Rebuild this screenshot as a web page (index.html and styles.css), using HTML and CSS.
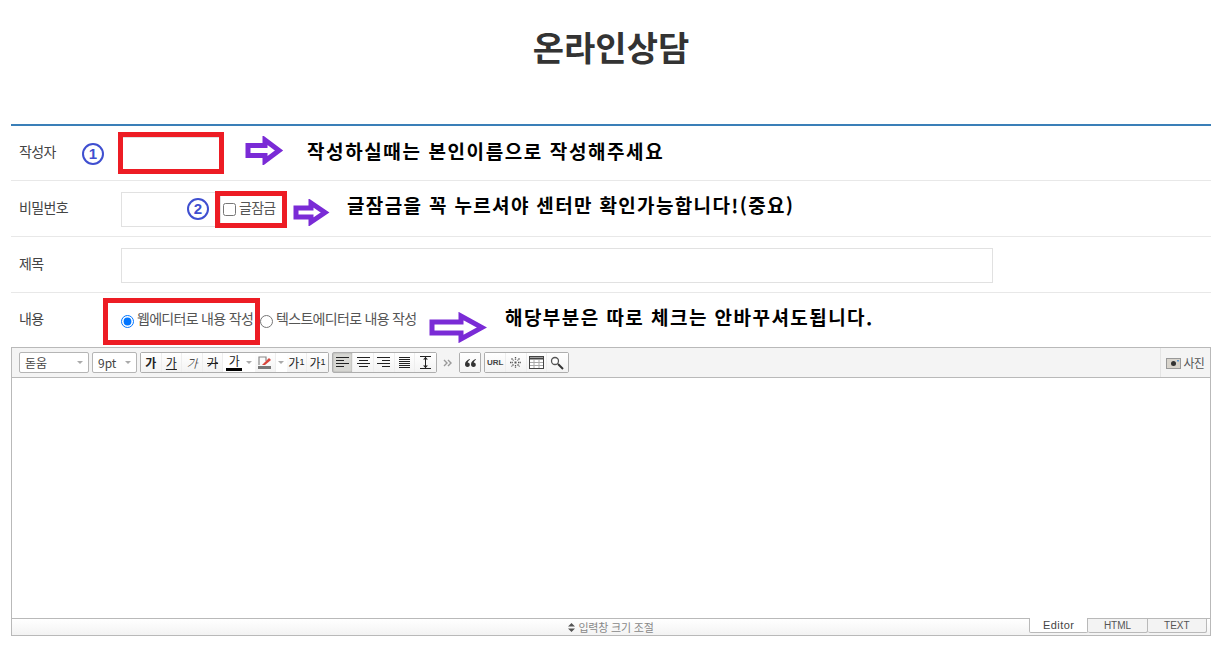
FILE: index.html
```html
<!DOCTYPE html>
<html lang="ko">
<head>
<meta charset="utf-8">
<title>온라인상담</title>
<link rel="stylesheet" href="styles.css">
</head>
<body>
<div class="page">
  <h1 class="title">온라인상담</h1>
  <form class="form">
    <div class="row"><label class="label">작성자</label><input class="input short" type="text"></div>
    <div class="row"><label class="label">비밀번호</label><input class="input short" type="password"><label class="check"><input type="checkbox" class="box">글잠금</label></div>
    <div class="row"><label class="label">제목</label><input class="input wide" type="text"></div>
    <div class="row"><label class="label">내용</label>
      <label class="check first"><input type="radio" name="ed" class="box" checked>웹에디터로 내용 작성</label>
      <label class="check second"><input type="radio" name="ed" class="box">텍스트에디터로 내용 작성</label>
    </div>
  </form>
  <div class="editor">
    <div class="toolbar">
      <div class="select font"><span>돋움</span><i class="caret"></i></div>
      <div class="select size"><span>9pt</span><i class="caret"></i></div>
      <div class="group">
        <button type="button" class="btn g b">가</button>
        <button type="button" class="btn g u">가</button>
        <button type="button" class="btn g it">가</button>
        <button type="button" class="btn g st">가</button>
        <button type="button" class="btn g col">가</button>
        <span class="drop"><i class="caret"></i></span>
        <button type="button" class="btn">
          <svg width="15" height="15" viewBox="0 0 15 15"><rect x="1" y="11" width="13" height="3" fill="#777"/><path d="M2 10V2h7v4" fill="none" stroke="#888" stroke-width="1.2"/><path d="M5 10l7-7 2 2-6 5z" fill="#d8453c"/></svg>
        </button>
        <span class="drop"><i class="caret"></i></span>
        <button type="button" class="btn g">가<sup class="mini">1</sup></button>
        <button type="button" class="btn g">가<sub class="mini">1</sub></button>
      </div>
      <div class="group">
        <button type="button" class="btn on"><svg width="15" height="13" viewBox="0 0 15 13"><path d="M1 1.5h13M1 4.500h8M1 7.500h13M1 10.500h8" stroke="#222"/></svg></button>
        <button type="button" class="btn"><svg width="15" height="13" viewBox="0 0 15 13"><path d="M1 1.500h13M3 4.500h9M1 7.500h13M3 10.500h9" stroke="#222"/></svg></button>
        <button type="button" class="btn"><svg width="15" height="13" viewBox="0 0 15 13"><path d="M1 1.500h13M6 4.500h8M1 7.500h13M6 10.500h8" stroke="#222"/></svg></button>
        <button type="button" class="btn"><svg width="15" height="13" viewBox="0 0 15 13"><path d="M2 1.500h11M2 3.500h11M2 5.500h11M2 7.500h11M2 9.500h11M2 11.500h11" stroke="#222"/></svg></button>
        <button type="button" class="btn"><svg width="15" height="15" viewBox="0 0 15 15"><path d="M2 1.500h11M2 13.500h11M7.500 2v11" stroke="#222"/><path d="M5 4.500l2.500-2.500 2.500 2.500zM5 10.500l2.500 2.500 2.500-2.500z" fill="#222"/></svg></button>
      </div>
      <span class="more">
        <svg width="10" height="8" viewBox="0 0 10 8"><path d="M1 1l3 3-3 3M5 1l3 3-3 3" fill="none" stroke="#999" stroke-width="1.400"/></svg>
      </span>
      <div class="group">
        <button type="button" class="btn"><svg width="11" height="8" viewBox="0 0 11 8"><path d="M4.500 0C2 1 0 3 0 5.200 0 7 1 8 2.400 8S4.800 7 4.800 5.700 3.800 3.600 2.700 3.600C3 2.500 3.800 1.500 5 .8zM10.500 0C8 1 6 3 6 5.200 6 7 7 8 8.400 8s2.400-1 2.400-2.300-1-2.100-2.100-2.100C9 2.500 9.800 1.500 11 .8z" fill="#333"/></svg></button>
      </div>
      <div class="group">
        <button type="button" class="btn url">URL</button>
        <button type="button" class="btn"><svg width="13" height="13" viewBox="0 0 13 13"><path d="M6.500 1v3M6.500 9v3M1 6.500h3M9 6.500h3M2.500 2.500l2 2M8.500 8.500l2 2M10.500 2.500l-2 2M4.500 8.500l-2 2" stroke="#555" stroke-width="1.300" stroke-dasharray="1.500 .7"/><rect x="5.500" y="5.500" width="2" height="2" fill="#555"/></svg></button>
        <button type="button" class="btn"><svg width="15" height="13" viewBox="0 0 15 13"><rect x=".5" y=".5" width="14" height="12" fill="#fff" stroke="#444"/><path d="M1 2.500h13" stroke="#444" stroke-width="2"/><path d="M1 6.500h13M1 9.500h13M5 4v8M10 4v8" stroke="#aaa"/></svg></button>
        <button type="button" class="btn"><svg width="14" height="14" viewBox="0 0 14 14"><circle cx="5" cy="5" r="3.500" fill="#fff" stroke="#555" stroke-width="1.300"/><path d="M8 8l5 5" stroke="#333" stroke-width="2"/></svg></button>
      </div>
      <div class="photo">
        <svg width="15" height="12" viewBox="0 0 15 12"><rect x=".5" y="1.500" width="14" height="10" fill="#d8d4cc" stroke="#999"/><circle cx="7.500" cy="6.500" r="2.500" fill="#333"/><rect x="11" y="3" width="2" height="1.500" fill="#5a9ad8"/></svg>
        <span>사진</span>
      </div>
    </div>
    <div class="canvas"></div>
    <div class="resize">
      <div class="grip"><svg width="7" height="9" viewBox="0 0 7 9"><path d="M3.500 0L7 3.500H0zM3.500 9L0 5.500h7z" fill="#555"/></svg><span>입력창 크기 조절</span></div>
      <div class="tabs">
        <span class="tab active">Editor</span><span class="tab">HTML</span><span class="tab">TEXT</span>
      </div>
    </div>
  </div>

  <div class="mark red-a"></div>
  <div class="mark red-b"></div>
  <div class="mark red-c"></div>
  <span class="num num-a">1</span>
  <span class="num num-b">2</span>
  <svg class="arrow arrow-a" width="39" height="29" viewBox="0 0 39 29"><path d="M3 9.500h17V4L34 14.500 20 25v-5.500H3z" fill="#fff" stroke="#7a2bd6" stroke-width="5"/></svg>
  <svg class="arrow arrow-b" width="37" height="27" viewBox="0 0 37 27"><path d="M3 9h15V4L32 13.500 18 23v-5H3z" fill="#fff" stroke="#7a2bd6" stroke-width="5"/></svg>
  <svg class="arrow arrow-c" width="58" height="31" viewBox="0 0 58 31"><path d="M3 10h29V4L53 15.500 32 27v-6H3z" fill="#fff" stroke="#7a2bd6" stroke-width="5"/></svg>
  <p class="note note-a">작성하실때는 본인이름으로 작성해주세요</p>
  <p class="note note-b">글잠금을 꼭 누르셔야 센터만 확인가능합니다!(중요)</p>
  <p class="note note-c">해당부분은 따로 체크는 안바꾸셔도됩니다.</p>
</div>
</body>
</html>
```
FILE: styles.css
```css
* { box-sizing: border-box; }
html, body { margin: 0; padding: 0; background: #fff; }
body { font-family: "Noto Sans CJK KR", "Noto Sans", sans-serif; color: #444; overflow: hidden; }
.page { position: relative; width: 1217px; height: 652px; padding: 0 6px 0 11px; }
.title { margin: 0; height: 124px; padding-top: 23px; text-align: center; font-size: 34px; line-height: 48px; font-weight: 700; color: #333; }
.form { border-top: 2px solid #3a7fb8; }
.row { display: flex; align-items: center; height: 56px; border-bottom: 1px solid #e8e8e8; }
.row:first-child { height: 55px; }
.row:last-child { border-bottom: 0; height: 54px; }
.label { width: 110px; padding-left: 8px; margin-top: -4px; font-size: 14px; letter-spacing: -.6px; color: #444; }
.input { height: 35px; margin-top: 2px; border: 1px solid #e1e1e1; background: #fff; padding: 0 6px; }
.short { width: 100px; }
.wide { width: 872px; }
.check { display: inline-flex; align-items: center; margin-top: -4px; font-size: 14px; letter-spacing: -.7px; color: #555; }
.row .check { margin-left: 2px; }
.row .first { margin-left: 0; }
.row .second { margin-left: 7px; }
.box { width: 13px; height: 13px; margin: 6px 3px 0 0; }
.editor { border: 1px solid #b9b9b9; height: 289px; display: flex; flex-direction: column; }
.toolbar { display: flex; align-items: center; height: 30px; padding-left: 7px; padding-right: 0; background: #f4f4f4; border-bottom: 1px solid #b9b9b9; gap: 3px; }
.select { display: flex; align-items: center; justify-content: space-between; height: 21px; background: #fff; border: 1px solid #b5b5b5; border-radius: 2px; padding: 0 5px; font-size: 12px; color: #444; }
.font { width: 70px; }
.size { width: 45px; }
.caret { display: block; width: 0; height: 0; border: 3px solid transparent; border-top: 3px solid #aaa; border-bottom: 0; }
.group { display: flex; align-items: stretch; height: 21px; background: #fff; border: 1px solid #aeaeae; border-radius: 2px; }
.btn { display: flex; align-items: center; justify-content: center; width: 20.6px; height: 19px; padding: 0; border: 0; border-right: 1px solid #eee; background: linear-gradient(#fff, #f3f3f3); font-family: inherit; font-size: 12px; color: #222; line-height: 1; }
.btn:last-child { border-right: 0; }
.on { background: #d8d8d4; box-shadow: inset 0 0 2px #999; }
.drop { display: flex; align-items: center; justify-content: center; width: 11px; }
.b { font-weight: 700; }
.u { text-decoration: underline; }
.it { font-style: italic; font-weight: 300; }
.st { text-decoration: line-through; }
.col { border-bottom: 3px solid #000; height: 17px; margin-top: 1px; width: 15.600px; margin-left: 3px; margin-right: 2px; border-right: 0; background: none; }
.mini { font: 400 9px/1 "Liberation Sans", sans-serif; }
.more { display: flex; width: 16px; justify-content: center; }
.url { font-size: 8px; font-weight: 700; font-family: "Liberation Sans", sans-serif; color: #444; }
.photo { margin-left: auto; display: flex; align-items: center; gap: 3px; height: 29px; padding: 0 6px 0 5px; border-left: 1px solid #e4e4e4; font-size: 12px; letter-spacing: -.8px; color: #555; }
.canvas { flex: 1; background: #fff; }
.resize { position: relative; height: 17px; border-top: 1px solid #b9b9b9; background: linear-gradient(#fff, #f3f3f3); display: flex; align-items: center; justify-content: center; }
.grip { display: flex; align-items: center; gap: 3px; font-size: 11px; letter-spacing: -.2px; color: #888; }
.tabs { position: absolute; top: -1px; right: 3px; display: flex; }
.tab { width: 59.330px; height: 15px; border: 1px solid #b9b9b9; border-left: 0; background: #f3f3f3; font-family: "Liberation Sans", sans-serif; font-size: 10px; line-height: 14px; text-align: center; color: #555; border-radius: 0 0 2px 2px; }
.tab.active { background: #fff; border-left: 1px solid #b9b9b9; border-top: 0; font-size: 11px; letter-spacing: .4px; color: #444; }
.mark { position: absolute; border: 5px solid #ed1c24; }
.red-a { left: 118px; top: 132px; width: 106px; height: 42px; }
.red-b { left: 215px; top: 191px; width: 72px; height: 37px; }
.red-c { left: 103px; top: 298px; width: 157px; height: 47px; }
.num { position: absolute; width: 22px; height: 22px; border: 2px solid #3f4fd0; border-radius: 50%; color: #3f4fd0; font: 700 15px/18px "Liberation Sans", sans-serif; text-align: center; }
.num-a { left: 82px; top: 143px; }
.num-b { left: 187px; top: 198px; }
.arrow { position: absolute; }
.arrow-a { left: 245px; top: 136px; }
.arrow-b { left: 293px; top: 199px; }
.arrow-c { left: 429px; top: 312px; }
.note { position: absolute; margin: 0; font-size: 19px; font-weight: 700; line-height: 26px; color: #000; white-space: nowrap; letter-spacing: 1.450px; }
.note-a { left: 307px; top: 138px; letter-spacing: 1.600px; }
.note-b { left: 347px; top: 192px; letter-spacing: 1.340px; }
.note-c { left: 505px; top: 304px; }
```
